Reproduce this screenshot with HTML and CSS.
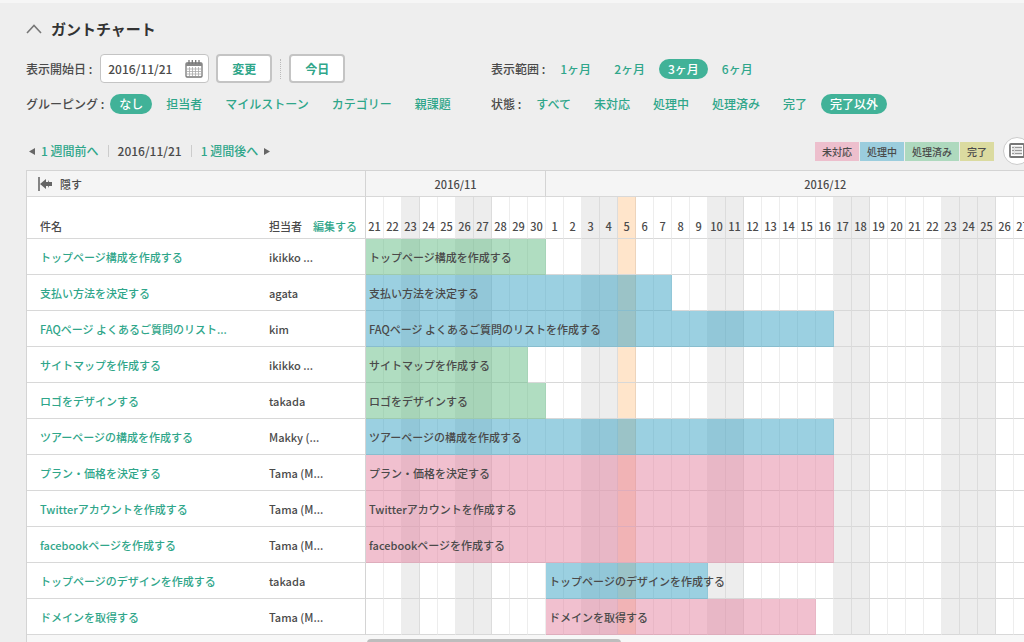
FILE: index.html
```html
<!DOCTYPE html>
<html lang="ja">
<head>
<meta charset="utf-8">
<title>ガントチャート</title>
<link rel="stylesheet" href="styles.css">
</head>
<body>
<main class="page">
  <h1 class="title">
    <svg class="title-icon" width="16" height="10" viewBox="0 0 16 10" aria-hidden="true"><path d="M1 9 L8 1.5 L15 9" fill="none" stroke="#777" stroke-width="1.6"/></svg>
    ガントチャート
  </h1>

  <div class="filters filters-top">
    <form class="field" onsubmit="return false">
      <label class="label" for="start">表示開始日 :</label>
      <span class="date-box">
        <input id="start" class="date-input" type="text" value="2016/11/21">
        <svg width="18" height="18" viewBox="0 0 18 18" aria-hidden="true">
          <rect x="1" y="3" width="16" height="14" rx="1" fill="#fff" stroke="#777" stroke-width="1.3"/>
          <path d="M1 3h16v3H1z" fill="#888"/>
          <path d="M4 0v4M7.300 0v4M10.700 0v4M14 0v4" stroke="#777" stroke-width="1.3"/>
          <path d="M4.500 7v9M7.500 7v9M10.500 7v9M13.500 7v9M2 9h14M2 11.500h14M2 14h14" stroke="#aaa" stroke-width=".8"/>
        </svg>
      </span>
      <button class="btn" type="submit">変更</button>
      <span class="dots"></span>
      <button class="btn" type="button">今日</button>
    </form>
    <nav class="field" aria-label="表示範囲">
      <span class="label">表示範囲 :</span>
      <span class="options">
        <a class="option" href="#">1ヶ月</a>
        <a class="option" href="#">2ヶ月</a>
        <a class="option option-on" href="#">3ヶ月</a>
        <a class="option" href="#">6ヶ月</a>
      </span>
    </nav>
  </div>

  <div class="filters filters-bottom">
    <nav class="field" aria-label="グルーピング">
      <span class="label">グルーピング :</span>
      <span class="options">
        <a class="option option-on" href="#">なし</a>
        <a class="option" href="#">担当者</a>
        <a class="option" href="#">マイルストーン</a>
        <a class="option" href="#">カテゴリー</a>
        <a class="option" href="#">親課題</a>
      </span>
    </nav>
    <nav class="field" aria-label="状態">
      <span class="label">状態 :</span>
      <span class="options">
        <a class="option" href="#">すべて</a>
        <a class="option" href="#">未対応</a>
        <a class="option" href="#">処理中</a>
        <a class="option" href="#">処理済み</a>
        <a class="option" href="#">完了</a>
        <a class="option option-on" href="#">完了以外</a>
      </span>
    </nav>
  </div>

  <div class="toolbar">
    <nav class="weeks" aria-label="週の移動">
      <a class="week" href="#"><svg width="6" height="7" viewBox="0 0 6 7" aria-hidden="true"><path d="M6 0v7L0 3.500z" fill="#666"/></svg>1 週間前へ</a>
      <span class="current">2016/11/21</span>
      <a class="week" href="#">1 週間後へ<svg width="6" height="7" viewBox="0 0 6 7" aria-hidden="true"><path d="M0 0v7l6-3.500z" fill="#666"/></svg></a>
    </nav>
    <ul class="legend">
      <li class="legend-open">未対応</li>
      <li class="legend-progress">処理中</li>
      <li class="legend-resolved">処理済み</li>
      <li class="legend-closed">完了</li>
    </ul>
    <button class="round" type="button" aria-label="一覧">
      <svg width="16" height="16" viewBox="0 0 16 16" aria-hidden="true">
        <rect x="1" y="1" width="14" height="13" rx="1" fill="#fff" stroke="#777" stroke-width="1.8"/>
        <path d="M3 4.500h10M3 7.500h10M3 10.500h10" stroke="#999" stroke-width="1.5"/>
        <path d="M5.500 3v9" stroke="#ddd" stroke-width="1"/>
      </svg>
    </button>
  </div>

  <div class="chart">
    <table class="gantt">
      <colgroup id="columns"><col class="col-name"><col class="col-user"></colgroup>
      <thead>
        <tr class="months">
          <th colspan="2" class="hide-cell edge">
            <button class="hide" type="button">
              <svg width="15" height="14" viewBox="0 0 15 14" aria-hidden="true"><path d="M1 0v14" stroke="#555" stroke-width="1.4"/><path d="M2 7l6-5v3h2V3l1 2h3v4h-3l-1 2V9H8v3z" fill="#666"/></svg>
              隠す
            </button>
          </th>
          <th colspan="10" class="edge">2016/11</th>
          <th colspan="31">2016/12</th>
        </tr>
        <tr class="days" id="days">
          <th class="name">件名</th>
          <th class="user edge"><span class="user-head">担当者 <a href="#">編集する</a></span></th>
        </tr>
      </thead>
      <tbody id="tasks"></tbody>
    </table>
    <div class="scroll-track"><div class="scroll-thumb"></div></div>
  </div>
</main>
<script src="gantt.js"></script>
</body>
</html>
```

FILE: styles.css
```css
* {
  box-sizing: border-box;
}

body {
  margin: 0;
  border-top: 3px solid #f6f6f6;
  background: #eee;
  color: #4a4a4a;
  font: 500 12px/20px "Noto Sans CJK JP", sans-serif;
  overflow-x: hidden;
}

a {
  color: #2fa68a;
  text-decoration: none;
}

button,
input {
  font: inherit;
  color: inherit;
}

.page {
  padding: 16px 0 0 26px;
  overflow: hidden;
}

.title {
  display: flex;
  align-items: center;
  gap: 9px;
  margin: 0 0 15px;
  font-size: 15px;
  line-height: 20px;
  color: #333;
}

.filters {
  display: grid;
  grid-template-columns: 465px 1fr;
  align-items: center;
}

.filters-top {
  margin-bottom: 11px;
}

.filters-bottom {
  margin-bottom: 23px;
}

.field {
  display: flex;
  align-items: center;
  white-space: nowrap;
}

.label {
  margin-right: 6px;
}

.options {
  display: flex;
  gap: 5px;
}

.option {
  padding: 0 9px;
  border-radius: 10px;
}

.option-on {
  background: #41b298;
  color: #fff;
}

.date-box {
  display: flex;
  align-items: center;
  justify-content: space-between;
  width: 109px;
  height: 29px;
  margin: 0 7px 0 2px;
  padding: 0 5px 0 7px;
  border: 1px solid #c4c4c4;
  border-radius: 4px;
  background: #fff;
}

.date-input {
  width: 72px;
  padding: 0;
  border: 0;
  background: none;
  outline: 0;
}

.btn {
  width: 56px;
  height: 29px;
  padding: 0;
  border: 2px solid #c4c4c4;
  border-radius: 4px;
  background: #fff;
  color: #2fa68a;
  font-weight: 700;
  line-height: 20px;
}

.dots {
  height: 20px;
  margin: 0 8px;
  border-left: 1px dotted #bbb;
}

.toolbar {
  display: flex;
  align-items: center;
  height: 28px;
  margin: 0 -7px 5px 0;
}

.weeks {
  display: flex;
  align-items: center;
  margin-right: auto;
  padding-left: 3px;
}

.week {
  display: flex;
  align-items: center;
  gap: 6px;
}

.current {
  margin: 0 9px;
  padding: 0 9px;
  border: solid #ccc;
  border-width: 0 1px;
  line-height: 12px;
}

.legend {
  display: flex;
  gap: 1px;
  margin: 0 9px 0 0;
  padding: 0;
  list-style: none;
  font-size: 10px;
  line-height: 19px;
}

.legend li {
  padding: 0 7px;
}

.legend-open {
  background: #edbfcd;
}

.legend-progress {
  background: #9bcddd;
}

.legend-resolved {
  background: #aed9be;
}

.legend-closed {
  background: #dbdba0;
}

.round {
  display: flex;
  align-items: center;
  justify-content: center;
  width: 28px;
  height: 28px;
  padding: 0;
  border: 1px solid #ccc;
  border-radius: 50%;
  background: #fff;
}

.chart {
  border: solid #d4d4d4;
  border-width: 1px 0 0 1px;
  background: #fff;
}

.gantt {
  width: 1077px;
  table-layout: fixed;
  border-spacing: 0;
  font-size: 11px;
}

.col-name {
  width: 229px;
}

.col-user {
  width: 110px;
}

.col-day {
  width: 18px;
}

.col-off {
  background: #ededed;
}

.col-today {
  background: #ffe5cb;
}

.gantt th,
.gantt td {
  padding: 0;
  border-bottom: 1px solid #d8d8d8;
  font-weight: 500;
  white-space: nowrap;
}

.months th {
  height: 26px;
  background: #f5f5f5;
}

.gantt .edge {
  border-right: 1px solid #d4d4d4;
}

.gantt .days th {
  height: 42px;
  padding-bottom: 2px;
  vertical-align: bottom;
}

.gantt .day {
  border-right: 1px solid rgba(0, 0, 0, .07);
}

.gantt .name,
.gantt .user {
  padding-left: 13px;
  text-align: left;
}

.hide {
  display: flex;
  align-items: center;
  gap: 7px;
  padding: 0 0 0 11px;
  border: 0;
  background: none;
}

.user-head {
  display: flex;
  gap: 11px;
}

.gantt td {
  height: 36px;
}

.bar-slot {
  position: relative;
  height: 35px;
}

.bar {
  position: absolute;
  top: 0;
  left: 0;
  height: 36px;
  padding-left: 3px;
  line-height: 36px;
}

.open {
  background: rgba(227, 129, 159, .5);
}

.progress {
  background: rgba(55, 161, 195, .5);
}

.resolved {
  background: rgba(97, 187, 131, .5);
}

.scroll-track {
  height: 8px;
  padding: 4px 0 0 340px;
  background: #f7f7f7;
}

.scroll-thumb {
  width: 254px;
  height: 4px;
  border-radius: 4px 4px 0 0;
  background: #bdbdbd;
}
```

FILE: gantt.js
```js
const DAY_WIDTH = 18;

const days = [];
for (let d = 21; d <= 30; d++) days.push({ d, off: [23, 26, 27].includes(d) });
for (let d = 1; d <= 31; d++) {
  days.push({ d, off: [3, 4, 10, 11, 17, 18, 23, 24, 25, 31].includes(d), today: d === 5 });
}

const tasks = [
  { name: "トップページ構成を作成する", user: "ikikko ...", start: 0, length: 10, state: "resolved" },
  { name: "支払い方法を決定する", user: "agata", start: 0, length: 17, state: "progress" },
  { name: "FAQページ よくあるご質問のリストを作成する", short: "FAQページ よくあるご質問のリスト...", user: "kim", start: 0, length: 26, state: "progress" },
  { name: "サイトマップを作成する", user: "ikikko ...", start: 0, length: 9, state: "resolved" },
  { name: "ロゴをデザインする", user: "takada", start: 0, length: 10, state: "resolved" },
  { name: "ツアーページの構成を作成する", user: "Makky (...", start: 0, length: 26, state: "progress" },
  { name: "プラン・価格を決定する", user: "Tama (M...", start: 0, length: 26, state: "open" },
  { name: "Twitterアカウントを作成する", user: "Tama (M...", start: 0, length: 26, state: "open" },
  { name: "facebookページを作成する", user: "Tama (M...", start: 0, length: 26, state: "open" },
  { name: "トップページのデザインを作成する", user: "takada", start: 10, length: 9, state: "progress" },
  { name: "ドメインを取得する", user: "Tama (M...", start: 10, length: 15, state: "open" }
];

document.getElementById("columns").insertAdjacentHTML("beforeend", days.map(day =>
  `<col class="col-day${day.off ? " col-off" : ""}${day.today ? " col-today" : ""}">`).join(""));

document.getElementById("days").insertAdjacentHTML("beforeend", days.map(day =>
  `<th class="day">${day.d}</th>`).join(""));

document.getElementById("tasks").innerHTML = tasks.map(task => {
  const bar = `<div class="bar-slot"><div class="bar ${task.state}" style="width:${task.length * DAY_WIDTH}px">${task.name}</div></div>`;
  const cells = days.map((day, i) => `<td class="day">${i === task.start ? bar : ""}</td>`).join("");
  return `<tr><td class="name"><a href="#">${task.short || task.name}</a></td><td class="user edge">${task.user}</td>${cells}</tr>`;
}).join("");
```
